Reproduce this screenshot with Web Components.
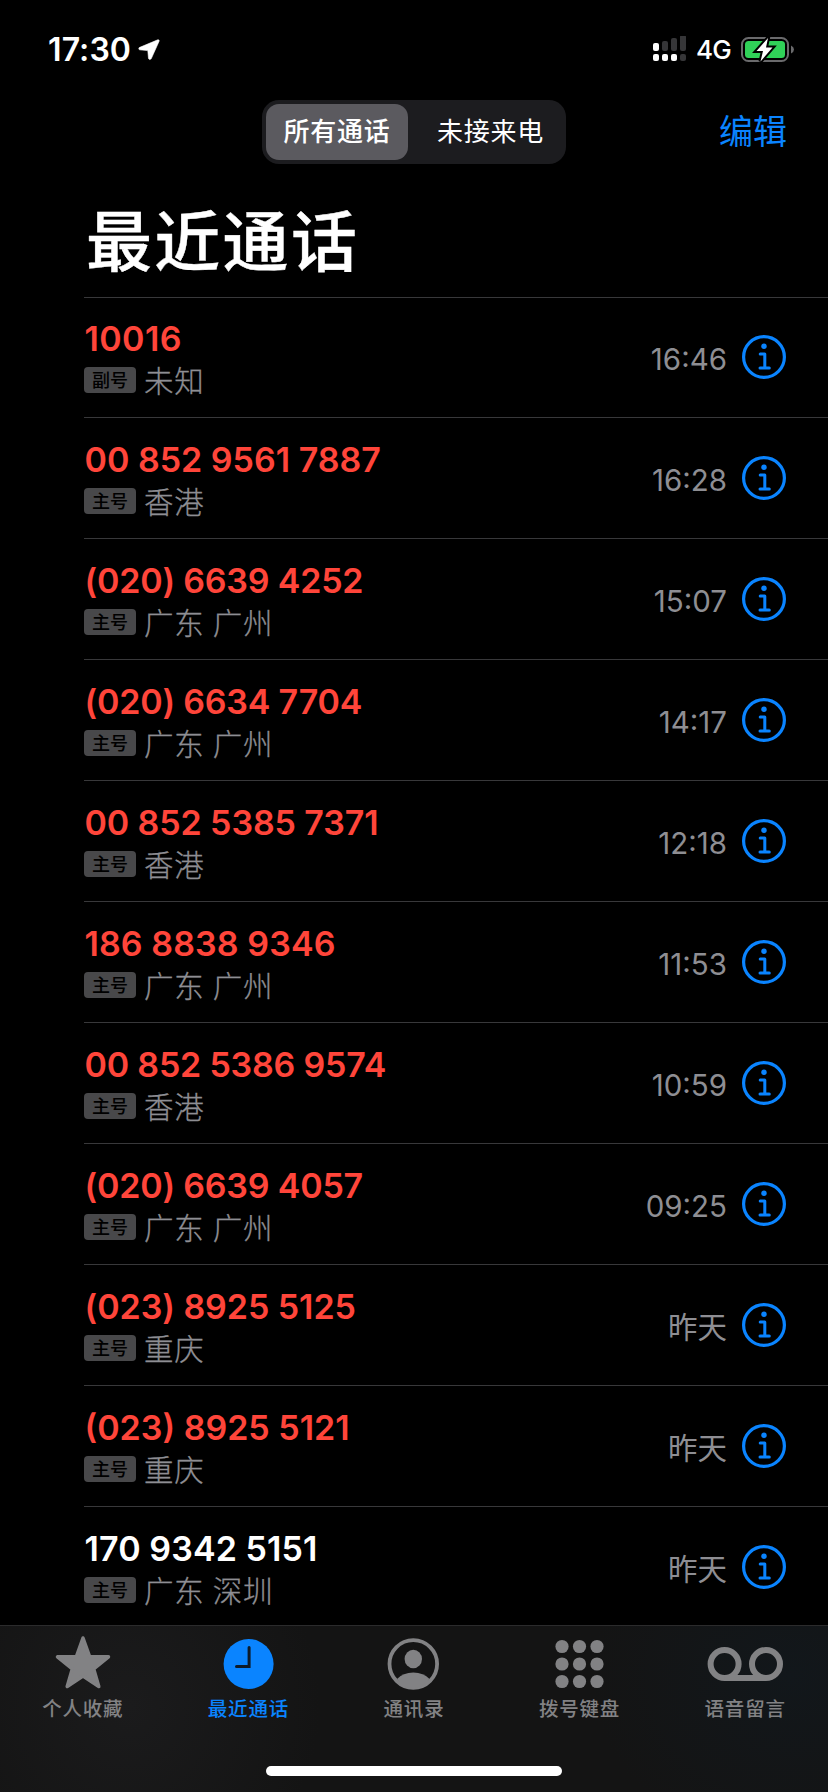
<!DOCTYPE html>
<html lang="zh-CN">

  <head>
    <meta charset="UTF-8">
    <meta name="viewport" content="width=device-width, initial-scale=1.0">
    <title>最近通话</title>
    <style>
      html,
      body {
        margin: 0;
        background: #000;
      }

      body {
        width: 828px;
        height: 1792px;
        overflow: hidden;
        color: #fff;
        font-family: Inter, "Noto Sans CJK SC", sans-serif;
      }
    </style>
  </head>

  <body>
    <script>
      class StatusBar extends HTMLElement {
        constructor() {
          super();
          this.attachShadow({ mode: 'open' });
          this.shadowRoot.innerHTML = `
          <style>
            :host {
              display: flex;
              align-items: center;
              box-sizing: border-box;
              height: 100px;
              padding: 0 34px 0 48px;
            }
            .time {
              font-size: 32px;
              font-weight: 600;
              line-height: 40px;
              letter-spacing: 0.1px;
            }
            .arrow { margin-left: 7px; }
            .signal { margin-left: auto; }
            .net {
              margin-left: 9px;
              font-size: 26px;
              font-weight: 500;
              line-height: 40px;
              letter-spacing: -0.8px;
            }
            .battery { margin-left: 10px; }
            svg { display: block; }
          </style>
          <span class="time"><slot name="time"></slot></span>
          <svg class="arrow" width="22" height="22" viewBox="0 0 22 22">
            <path d="M19.8 0.8 1.2 8.6Q0.2 9.6 1.4 10.8L9.8 11.6 10.5 19.6Q11.6 21.4 13.2 19.8L21.2 2Q21.4 0.6 19.8 0.8Z" fill="#fff" stroke="#fff" stroke-width="0.6"/>
          </svg>
          <svg class="signal" width="34" height="28" viewBox="0 0 34 28">
            <g fill="#363638">
              <rect x="9" y="5" width="6" height="10" rx="2"/>
              <rect x="18" y="2" width="6" height="13" rx="2"/>
              <rect x="27" y="-1" width="6" height="16" rx="2"/>
              <rect x="27" y="18" width="6" height="7" rx="2"/>
            </g>
            <g fill="#fff">
              <rect x="0" y="7" width="6" height="8" rx="2"/>
              <rect x="0" y="18" width="6" height="7" rx="2"/>
              <rect x="9" y="18" width="6" height="7" rx="2"/>
              <rect x="18" y="18" width="6" height="7" rx="2"/>
            </g>
          </svg>
          <span class="net"><slot name="network"></slot></span>
          <svg class="battery" width="53" height="28" viewBox="0 0 53 28">
            <rect x="1" y="2" width="46" height="23" rx="6.5" fill="none" stroke="#6a6a6c" stroke-width="2"/>
            <rect x="4" y="5" width="40" height="17" rx="3.5" fill="#30d158"/>
            <path d="M50 9.5Q53 11 53 13.5T50 17.5Z" fill="#6a6a6c"/>
            <path d="M27 2 15.5 15H22L19.5 25.5 31.5 11.5H25Z" fill="#fff" stroke="#000" stroke-width="4" paint-order="stroke"/>
          </svg>
        `;
        }
      }
      customElements.define('status-bar', StatusBar);

      class NavBar extends HTMLElement {
        constructor() {
          super();
          this.attachShadow({ mode: 'open' });
          this.shadowRoot.innerHTML = `
          <style>
            :host {
              display: grid;
              grid-template-columns: 1fr 304px 1fr;
              align-items: center;
              height: 64px;
            }
            .segments {
              grid-column: 2;
              display: flex;
              box-sizing: border-box;
              height: 64px;
              padding: 4px;
              border-radius: 17px;
              background: #1c1c1f;
            }
            .segments span {
              box-sizing: border-box;
              width: 142px;
              border-radius: 13px;
              font-size: 26px;
              line-height: 56px;
              letter-spacing: 0.7px;
              text-align: center;
            }
            .segments span + span {
              width: 154px;
              padding-left: 11px;
            }
            .on {
              background: #5b5a5f;
              font-weight: 500;
            }
            .edit {
              justify-self: end;
              margin-right: 41px;
              color: #0a84ff;
              font-size: 34px;
              line-height: 64px;
            }
          </style>
          <div class="segments">
            <span class="on"><slot name="all"></slot></span>
            <span><slot name="missed"></slot></span>
          </div>
          <div class="edit"><slot name="edit"></slot></div>
        `;
        }
      }
      customElements.define('nav-bar', NavBar);

      class PageTitle extends HTMLElement {
        constructor() {
          super();
          this.attachShadow({ mode: 'open' });
          this.shadowRoot.innerHTML = `
          <style>
            :host {
              display: block;
              height: 133px;
              padding-left: 86px;
              font-size: 66px;
              font-weight: 500;
              line-height: 156px;
              letter-spacing: 2.3px;
              white-space: nowrap;
              -webkit-text-stroke: 0.4px #fff;
            }
          </style>
          <slot></slot>
        `;
        }
      }
      customElements.define('page-title', PageTitle);

      class CallRow extends HTMLElement {
        constructor() {
          super();
          this.attachShadow({ mode: 'open' });
          this.shadowRoot.innerHTML = `
          <style>
            :host {
              display: flex;
              align-items: center;
              box-sizing: border-box;
              height: 121px;
              margin-left: 84px;
              padding-right: 42px;
              border-top: 1px solid #38383a;
            }
            :host(:first-of-type) { height: 120px; }
            .who {
              flex: 1;
              align-self: flex-start;
              padding-top: 21px;
            }
            :host(:first-of-type) .who { padding-top: 20px; }
            .number {
              height: 42px;
              padding-left: 0.5px;
              color: #ff453a;
              font-size: 34px;
              font-weight: 600;
              line-height: 42px;
              letter-spacing: var(--track, 0);
              white-space: pre;
            }
            :host([answered]) .number { color: #fff; }
            .place {
              display: flex;
              align-items: center;
              gap: 8px;
              height: 40px;
              color: #8e8e93;
            }
            .area {
              padding-top: 1px;
              font-size: 29.5px;
              font-weight: 300;
              line-height: 40px;
              letter-spacing: 0.8px;
              word-spacing: -1px;
              -webkit-text-stroke: 0.3px #8e8e93;
            }
            .tag {
              width: 52px;
              height: 26px;
              border-radius: 4px;
              background: #48484a;
              color: #000;
              font-size: 18px;
              font-weight: 500;
              line-height: 27px;
              text-align: center;
            }
            .when {
              padding-top: 3px;
              margin-right: 15px;
              color: #8e8e93;
              font-size: 29.5px;
              font-weight: 400;
              line-height: 40px;
            }
            svg { display: block; }
            :host(:first-of-type) svg { margin-top: -1px; }
          </style>
          <div class="who">
            <div class="number"><slot></slot></div>
            <div class="place">
              <span class="tag"><slot name="line"></slot></span>
              <span class="area"><slot name="place"></slot></span>
            </div>
          </div>
          <div class="when"><slot name="when"></slot></div>
          <svg width="44" height="44" viewBox="0 0 44 44" fill="none" stroke="#0a84ff">
            <circle cx="22" cy="22" r="20.4" stroke-width="3.2"/>
            <circle cx="22" cy="11.2" r="2.7" fill="#0a84ff" stroke="none"/>
            <path d="M18.2 19H22.8V33M18 33H27.3" stroke-width="3" stroke-linecap="round" stroke-linejoin="round"/>
          </svg>
        `;
        }
      }
      customElements.define('call-row', CallRow);

      class TabItem extends HTMLElement {
        constructor() {
          super();
          this.attachShadow({ mode: 'open' });
          this.shadowRoot.innerHTML = `
          <style>
            :host {
              flex: 1;
              display: flex;
              flex-direction: column;
              align-items: center;
              color: #828284;
            }
            :host([active]) { color: #0a84ff; }
            .icon {
              width: 78px;
              height: 68px;
            }
            .label {
              font-size: 19.5px;
              font-weight: 500;
              line-height: 30px;
              letter-spacing: 0.8px;
            }
          </style>
          <div class="icon"><slot name="icon"></slot></div>
          <div class="label"><slot></slot></div>
        `;
        }
      }
      customElements.define('tab-item', TabItem);

      class TabBar extends HTMLElement {
        constructor() {
          super();
          this.attachShadow({ mode: 'open' });
          this.shadowRoot.innerHTML = `
          <style>
            :host {
              position: absolute;
              left: 0;
              top: 1625px;
              width: 828px;
              height: 167px;
              box-sizing: border-box;
              border-top: 1px solid #2b2b2c;
              background:
                radial-gradient(ellipse 190px 200px at 130px 80px, #1b1b1c, transparent),
                radial-gradient(ellipse 200px 170px at 790px 50px, #12171b, transparent),
                #141414;
            }
            .tabs {
              display: flex;
              height: 140px;
            }
            .home {
              width: 296px;
              height: 10px;
              margin: 0 auto;
              border-radius: 5px;
              background: #fff;
            }
          </style>
          <div class="tabs"><slot></slot></div>
          <div class="home"></div>
        `;
        }
      }
      customElements.define('tab-bar', TabBar);
    </script>

    <status-bar>
      <span slot="time">17:30</span>
      <span slot="network">4G</span>
    </status-bar>

    <nav-bar>
      <span slot="all">所有通话</span>
      <span slot="missed">未接来电</span>
      <span slot="edit">编辑</span>
    </nav-bar>

    <page-title>最近通话</page-title>

    <main>
      <call-row style="--track: 0.4px">10016<span slot="line">副号</span><span slot="place">未知</span><span slot="when">16:46</span></call-row>
      <call-row>00 852 9561 7887<span slot="line">主号</span><span slot="place">香港</span><span slot="when">16:28</span></call-row>
      <call-row style="--track: -0.2px">(020) 6639 4252<span slot="line">主号</span><span slot="place">广东 广州</span><span slot="when">15:07</span></call-row>
      <call-row style="--track: -0.2px">(020) 6634 7704<span slot="line">主号</span><span slot="place">广东 广州</span><span slot="when">14:17</span></call-row>
      <call-row style="--track: -0.1px">00 852 5385 7371<span slot="line">主号</span><span slot="place">香港</span><span slot="when">12:18</span></call-row>
      <call-row style="--track: 0.1px">186 8838 9346<span slot="line">主号</span><span slot="place">广东 广州</span><span slot="when">11:53</span></call-row>
      <call-row style="--track: -0.2px">00 852 5386 9574<span slot="line">主号</span><span slot="place">香港</span><span slot="when">10:59</span></call-row>
      <call-row style="--track: -0.2px">(020) 6639 4057<span slot="line">主号</span><span slot="place">广东 广州</span><span slot="when">09:25</span></call-row>
      <call-row style="--track: -0.05px">(023) 8925 5125<span slot="line">主号</span><span slot="place">重庆</span><span slot="when">昨天</span></call-row>
      <call-row>(023) 8925 5121<span slot="line">主号</span><span slot="place">重庆</span><span slot="when">昨天</span></call-row>
      <call-row answered style="--track: 0.1px">170 9342 5151<span slot="line">主号</span><span slot="place">广东 深圳</span><span slot="when">昨天</span></call-row>
    </main>

    <tab-bar>
      <tab-item>
        <svg slot="icon" width="78" height="66" viewBox="0 0 78 66">
          <path d="M39 12 45.6 30.5 64.5 30.8 49.7 43 54.8 60.5 39 50 23.2 60.5 28.3 43 13.5 30.8 32.4 30.5Z" fill="currentColor" stroke="currentColor" stroke-width="3.5" stroke-linejoin="round"/>
        </svg>个人收藏
      </tab-item>
      <tab-item active>
        <svg slot="icon" width="78" height="66" viewBox="0 0 78 66">
          <circle cx="39.6" cy="38" r="25" fill="currentColor"/>
          <path d="M40.1 21.5V40.5H27.5" fill="none" stroke="#0d1b2a" stroke-width="3" stroke-linecap="round"/>
        </svg>最近通话
      </tab-item>
      <tab-item>
        <svg slot="icon" width="78" height="66" viewBox="0 0 78 66">
          <circle cx="38.3" cy="38" r="23.8" fill="none" stroke="currentColor" stroke-width="3.8"/>
          <ellipse cx="38.3" cy="33" rx="8.7" ry="9.3" fill="currentColor"/>
          <path d="M22 53Q28 46.5 38.3 46.5T54.6 53Q48 62 38.3 62T22 53Z" fill="currentColor"/>
        </svg>通讯录
      </tab-item>
      <tab-item>
        <svg slot="icon" width="78" height="66" viewBox="0 0 78 66" fill="currentColor">
          <circle cx="21" cy="20.5" r="6.6"/><circle cx="38.5" cy="20.5" r="6.6"/><circle cx="56" cy="20.5" r="6.6"/>
          <circle cx="21" cy="38" r="6.6"/><circle cx="38.5" cy="38" r="6.6"/><circle cx="56" cy="38" r="6.6"/>
          <circle cx="21" cy="55.5" r="6.6"/><circle cx="38.5" cy="55.5" r="6.6"/><circle cx="56" cy="55.5" r="6.6"/>
        </svg>拨号键盘
      </tab-item>
      <tab-item>
        <svg slot="icon" width="78" height="66" viewBox="0 0 78 66" fill="none" stroke="currentColor" stroke-width="6">
          <circle cx="18.6" cy="38" r="14"/>
          <circle cx="60" cy="38" r="14"/>
          <path d="M18.6 52H60"/>
        </svg>语音留言
      </tab-item>
    </tab-bar>
  </body>

</html>
